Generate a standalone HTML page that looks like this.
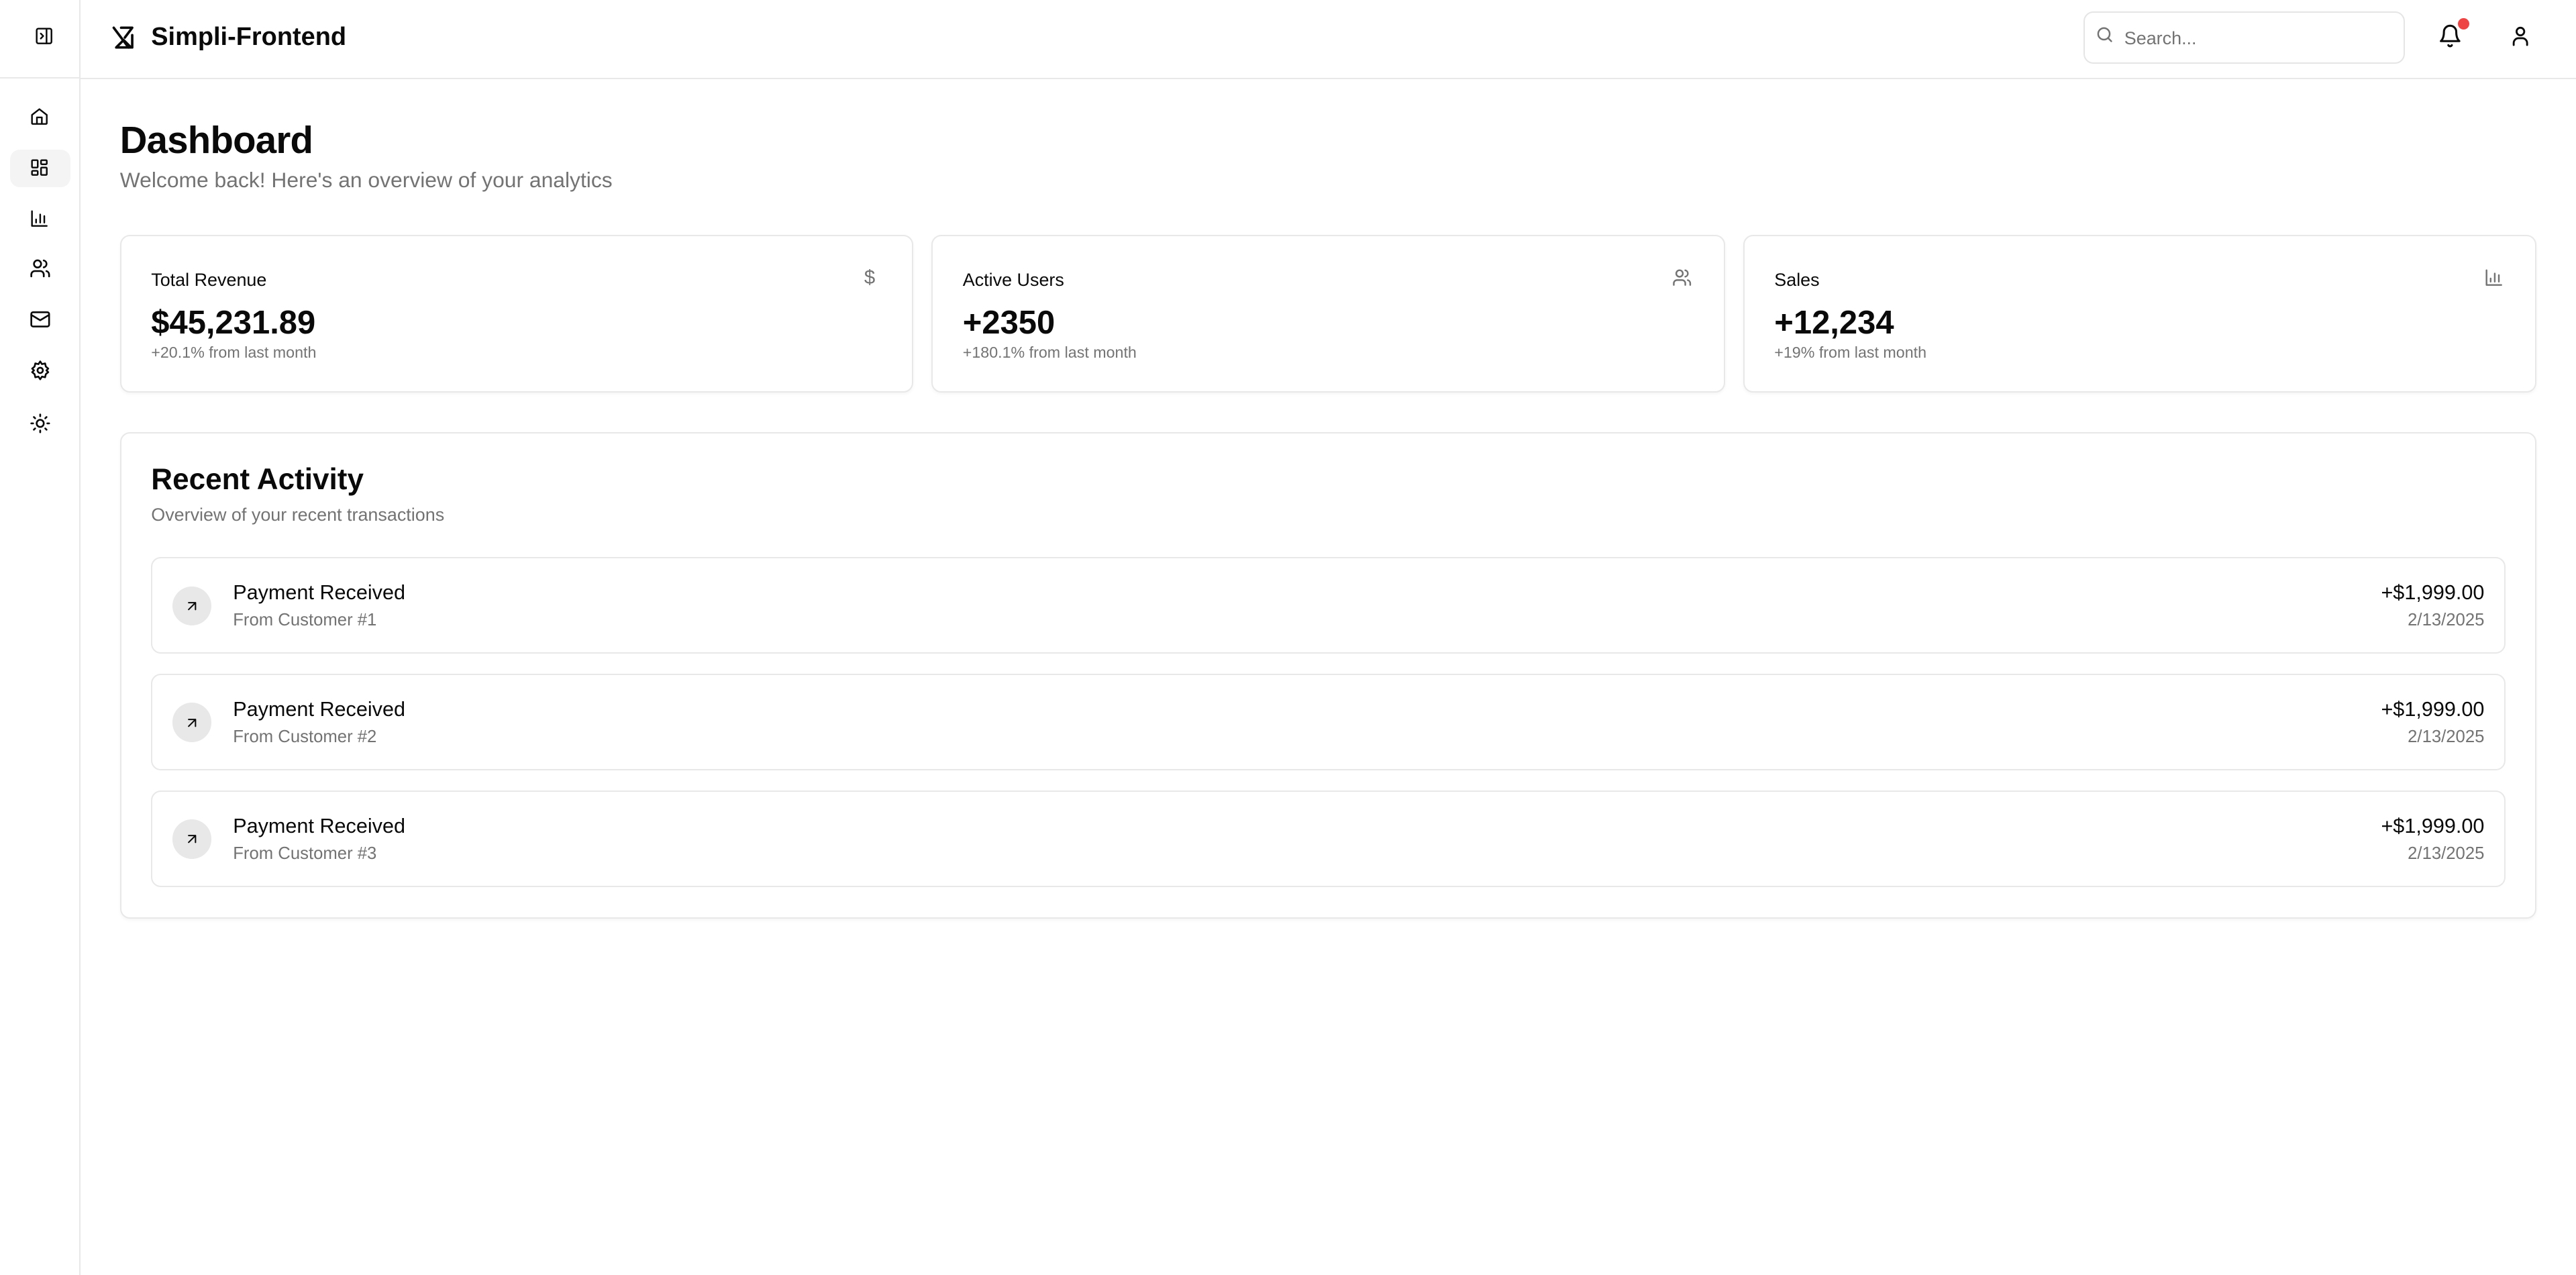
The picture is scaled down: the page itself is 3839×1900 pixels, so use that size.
<!DOCTYPE html>
<html><head><meta charset="utf-8"><style>
html{zoom:2.4484}
*{box-sizing:border-box;margin:0;padding:0}
body{width:1568px;height:776px;background:#fff;font-family:"Liberation Sans",sans-serif;color:#0a0a0a;position:relative;overflow:hidden}
.a{position:absolute}
svg{fill:none;stroke:#0a0a0a;stroke-width:2;stroke-linecap:round;stroke-linejoin:round}
.side{left:0;top:0;width:49px;height:776px;border-right:1px solid #e8e8e8}
.hdr{left:49px;top:0;right:0;height:48px;border-bottom:1px solid #e8e8e8}
.hl{left:0;top:47px;width:49px;border-bottom:1px solid #e8e8e8}
.card{border:1px solid #e8e8e8;border-radius:6px;box-shadow:0 1px 2px rgba(0,0,0,.04);background:#fff}
.gray{color:#737373}
.row{left:92px;width:1433px;height:59px;border:1px solid #e8e8e8;border-radius:6px}
.circ{left:12px;top:17px;width:24px;height:24px;border-radius:50%;background:#e8e8e8}
</style></head><body>
<div class="a side"></div>
<div class="a hl"></div>
<div class="a hdr"></div>
<svg class="a" style="left:21px;top:16px" width="12" height="12" viewBox="0 0 24 24"><rect x="3" y="3" width="18" height="18" rx="2"/><path d="M15 3v18M8 9l3 3-3 3"/></svg>
<svg class="a" style="left:67px;top:14px" width="18" height="18" viewBox="0 0 24 24"><path d="M3 4l12 16M9 4h9l-6 8M5 20l6-6 6 6H5zM18 10v10"/></svg>
<div class="a" style="left:92px;top:14px;font-size:15.5px;font-weight:600">Simpli-Frontend</div>
<div class="a" style="left:1268px;top:7px;width:196px;height:32px;border:1px solid #e5e5e5;border-radius:6px"></div>
<svg class="a" style="left:1275px;top:15px" width="12" height="12" viewBox="0 0 24 24"><circle cx="11" cy="11" r="7" stroke="#737373"/><path d="M20 20l-4-4" stroke="#737373"/></svg>
<div class="a gray" style="left:1293px;top:17px;font-size:11px">Search...</div>
<svg class="a" style="left:1484px;top:14px" width="15" height="16" viewBox="0 0 24 24"><path d="M6 8a6 6 0 0 1 12 0c0 7 3 9 3 9H3s3-2 3-9M10.3 21a1.9 1.9 0 0 0 3.4 0"/></svg>
<div class="a" style="left:1496px;top:11px;width:7px;height:7px;border-radius:50%;background:#ef4444"></div>
<svg class="a" style="left:1527px;top:15px" width="14" height="14" viewBox="0 0 24 24"><circle cx="12" cy="7" r="4"/><path d="M5 21v-2a5 5 0 0 1 5-5h4a5 5 0 0 1 5 5v2"/></svg>
<div class="a" style="left:6px;top:91px;width:37px;height:23px;border-radius:6px;background:#f4f4f4"></div>
<svg class="a" style="left:18px;top:65px" width="12" height="12" viewBox="0 0 24 24"><path d="M3 10l9-7 9 7v10a1 1 0 0 1-1 1H4a1 1 0 0 1-1-1zM9 21v-8h6v8"/></svg>
<svg class="a" style="left:18px;top:96px" width="12" height="12" viewBox="0 0 24 24"><rect x="3" y="3" width="7" height="9" rx="1"/><rect x="14" y="3" width="7" height="5" rx="1"/><rect x="14" y="12" width="7" height="9" rx="1"/><rect x="3" y="16" width="7" height="5" rx="1"/></svg>
<svg class="a" style="left:18px;top:127px" width="12" height="12" viewBox="0 0 24 24"><path d="M3 3v18h18M8 17v-4M13 17V7M18 17v-8"/></svg>
<svg class="a" style="left:18px;top:157px" width="13" height="13" viewBox="0 0 24 24"><circle cx="9" cy="7" r="4"/><path d="M2 21v-2a4 4 0 0 1 4-4h6a4 4 0 0 1 4 4v2M16 3.1a4 4 0 0 1 0 7.8M22 21v-2a4 4 0 0 0-3-3.9"/></svg>
<svg class="a" style="left:18px;top:188px" width="13" height="13" viewBox="0 0 24 24"><rect x="2" y="4" width="20" height="16" rx="2"/><path d="M22 7l-10 6L2 7"/></svg>
<svg class="a" style="left:18px;top:219px" width="13" height="13" viewBox="0 0 24 24"><circle cx="12" cy="12" r="3"/><path d="M12 2l2 3 3.5-.8.8 3.5L21 10l-2 2 2 2-2.7 2.3-.8 3.5L14 19l-2 3-2-3-3.5.8-.8-3.5L3 14l2-2-2-2 2.7-2.3.8-3.5L10 5z"/></svg>
<svg class="a" style="left:18px;top:251px" width="13" height="13" viewBox="0 0 24 24"><circle cx="12" cy="12" r="4"/><path d="M12 2v2M12 20v2M4.9 4.9l1.4 1.4M17.7 17.7l1.4 1.4M2 12h2M20 12h2M6.3 17.7l-1.4 1.4M19.1 4.9l-1.4 1.4"/></svg>

<div class="a" style="left:73px;top:72px;font-size:23px;font-weight:700;letter-spacing:-.3px">Dashboard</div>
<div class="a gray" style="left:73px;top:102px;font-size:13px">Welcome back! Here's an overview of your analytics</div>

<div class="a card" style="left:73px;top:143px;width:483px;height:96px"></div>
<div class="a card" style="left:567px;top:143px;width:483px;height:96px"></div>
<div class="a card" style="left:1061px;top:143px;width:483px;height:96px"></div>
<div class="a" style="left:92px;top:164px;font-size:11px;font-weight:500">Total Revenue</div>
<div class="a" style="left:586px;top:164px;font-size:11px;font-weight:500">Active Users</div>
<div class="a" style="left:1080px;top:164px;font-size:11px;font-weight:500">Sales</div>
<div class="a gray" style="left:526px;top:162px;font-size:12px">$</div>
<svg class="a" style="left:1018px;top:163px" width="12" height="12" viewBox="0 0 24 24"><circle cx="9" cy="7" r="4" stroke="#737373"/><path stroke="#737373" d="M2 21v-2a4 4 0 0 1 4-4h6a4 4 0 0 1 4 4v2M16 3.1a4 4 0 0 1 0 7.8M22 21v-2a4 4 0 0 0-3-3.9"/></svg>
<svg class="a" style="left:1512px;top:163px" width="12" height="12" viewBox="0 0 24 24"><path stroke="#737373" d="M3 3v18h18M8 17v-4M13 17V7M18 17v-8"/></svg>
<div class="a" style="left:92px;top:185px;font-size:20px;font-weight:700">$45,231.89</div>
<div class="a" style="left:586px;top:185px;font-size:20px;font-weight:700">+2350</div>
<div class="a" style="left:1080px;top:185px;font-size:20px;font-weight:700">+12,234</div>
<div class="a gray" style="left:92px;top:209px;font-size:9.5px">+20.1% from last month</div>
<div class="a gray" style="left:586px;top:209px;font-size:9.5px">+180.1% from last month</div>
<div class="a gray" style="left:1080px;top:209px;font-size:9.5px">+19% from last month</div>

<div class="a card" style="left:73px;top:263px;width:1471px;height:296px"></div>
<div class="a" style="left:92px;top:282px;font-size:18px;font-weight:600">Recent Activity</div>
<div class="a gray" style="left:92px;top:307px;font-size:11px">Overview of your recent transactions</div>

<div class="a row" style="top:339px"><div class="a circ"></div><svg class="a" style="left:19px;top:24px" width="10" height="10" viewBox="0 0 24 24"><path d="M7 17L17 7M7 7h10v10"/></svg>
<div class="a" style="left:49px;top:14px;font-size:12.5px">Payment Received</div><div class="a gray" style="left:49px;top:32px;font-size:10.5px">From Customer #1</div>
<div class="a" style="right:12px;top:14px;font-size:12.5px;font-weight:500">+$1,999.00</div><div class="a gray" style="right:12px;top:32px;font-size:10.5px">2/13/2025</div></div>

<div class="a row" style="top:410px"><div class="a circ"></div><svg class="a" style="left:19px;top:24px" width="10" height="10" viewBox="0 0 24 24"><path d="M7 17L17 7M7 7h10v10"/></svg>
<div class="a" style="left:49px;top:14px;font-size:12.5px">Payment Received</div><div class="a gray" style="left:49px;top:32px;font-size:10.5px">From Customer #2</div>
<div class="a" style="right:12px;top:14px;font-size:12.5px;font-weight:500">+$1,999.00</div><div class="a gray" style="right:12px;top:32px;font-size:10.5px">2/13/2025</div></div>

<div class="a row" style="top:481px"><div class="a circ"></div><svg class="a" style="left:19px;top:24px" width="10" height="10" viewBox="0 0 24 24"><path d="M7 17L17 7M7 7h10v10"/></svg>
<div class="a" style="left:49px;top:14px;font-size:12.5px">Payment Received</div><div class="a gray" style="left:49px;top:32px;font-size:10.5px">From Customer #3</div>
<div class="a" style="right:12px;top:14px;font-size:12.5px;font-weight:500">+$1,999.00</div><div class="a gray" style="right:12px;top:32px;font-size:10.5px">2/13/2025</div></div>
</body></html>
